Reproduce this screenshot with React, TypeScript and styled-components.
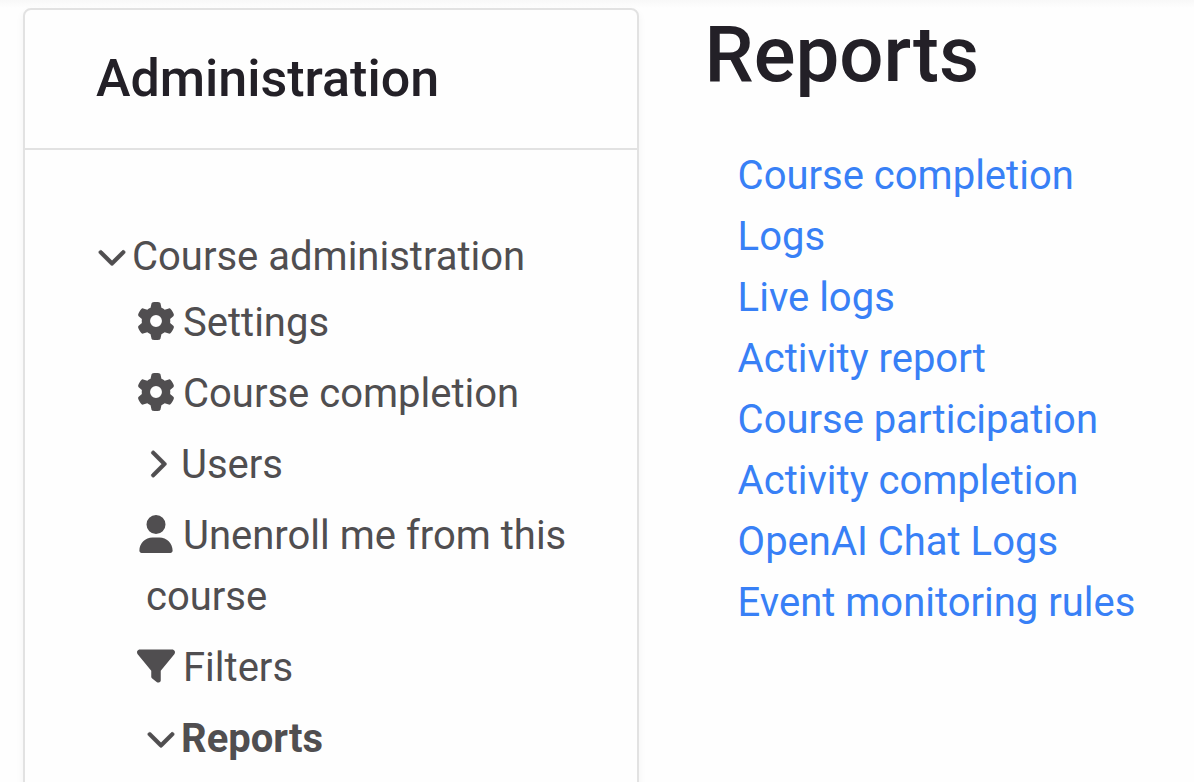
import React from "react";
import styled, { createGlobalStyle, css } from "styled-components";
import { FaChevronDown, FaChevronRight, FaFilter, FaGear, FaUser } from "react-icons/fa6";

const GlobalStyle = createGlobalStyle`
  *, *::before, *::after { box-sizing: border-box; }
  body {
    margin: 0;
    background: #fefefe;
    color: #504e50;
    font-family: Roboto, "Liberation Sans", sans-serif;
    font-size: 40px;
    line-height: 61px;
  }
  h1, h2, ul { margin: 0; padding: 0; }
  ul { list-style: none; }
`;

const Page = styled.div`
  display: flex;
  align-items: stretch;
  height: 100vh;
  padding: 8px 16px 0 23px;
  overflow: hidden;
  background: linear-gradient(#f8f8f8, #fefefe 8px);
`;

const Card = styled.aside`
  flex: 0 0 auto;
  width: 53.3%;
  height: max-content;
  border: 2px solid #e2e2e2;
  border-radius: 8px;
  background: #fefefe;
  box-shadow: 0 4px 8px rgba(0, 0, 0, 0.05);
`;

const CardHeader = styled.header`
  padding: 38px 71px;
  border-bottom: 2px solid #e2e2e2;
`;

const CardTitle = styled.h2`
  color: #232027;
  font-size: 52px;
  font-weight: 500;
  line-height: 62px;
`;

const Tree = styled.nav`
  padding: 76px 56px 76px 72px;
`;

const Branch = styled.ul`
  display: flex;
  flex-direction: column;
  gap: 10px;
  padding: 5px 0 0 49px;
`;

const nodeStyle = css`
  display: block;
  color: inherit;
  font: inherit;
  text-align: left;
  text-decoration: none;
`;

const Toggle = styled.button<{ $bold?: boolean }>`
  ${nodeStyle}
  padding: 0;
  border: 0;
  background: none;
  font-weight: ${(p) => (p.$bold ? 700 : 400)};
  cursor: pointer;
`;

const NodeLink = styled.a`
  ${nodeStyle}
  text-indent: -10px;
`;

const Icon = styled.span<{ $size: number; $width: number; $gap: number }>`
  display: inline-flex;
  align-items: center;
  justify-content: center;
  width: ${(p) => p.$width}px;
  height: 40px;
  margin-right: ${(p) => p.$gap}px;
  font-size: ${(p) => p.$size}px;
  vertical-align: -4px;
  text-indent: 0;
`;

const ToggleIcon = styled(Icon)`
  vertical-align: -1px;

  svg {
    overflow: visible;
    stroke-width: 12px;
  }
`;

const Main = styled.main`
  flex: 1 1 0;
  min-width: 0;
  padding-left: 66px;
`;

const Title = styled.h1`
  color: #232027;
  font-size: 78px;
  font-weight: 500;
  line-height: 94px;
`;

const ReportList = styled.ul`
  padding: 43px 0 0 33px;
`;

const ReportLink = styled.a`
  color: #3880f6;
  text-decoration: none;
`;

const reports = [
  "Course completion",
  "Logs",
  "Live logs",
  "Activity report",
  "Course participation",
  "Activity completion",
  "OpenAI Chat Logs",
  "Event monitoring rules",
];

function TreeLink({ icon, children }: { icon: React.ReactNode; children: React.ReactNode }) {
  return (
    <li>
      <NodeLink href="#">
        <Icon $size={38} $width={40} $gap={7} aria-hidden="true">{icon}</Icon>
        {children}
      </NodeLink>
    </li>
  );
}

function TreeToggle({ open, bold, children }: { open?: boolean; bold?: boolean; children: React.ReactNode }) {
  return (
    <Toggle type="button" aria-expanded={!!open} $bold={bold}>
      <ToggleIcon $size={30} $width={open ? 30 : 22} $gap={open ? 5 : 13} aria-hidden="true">
        {open ? <FaChevronDown /> : <FaChevronRight />}
      </ToggleIcon>
      {children}
    </Toggle>
  );
}

export default function App() {
  return (
    <>
      <GlobalStyle />
      <Page>
        <Card>
          <CardHeader>
            <CardTitle>Administration</CardTitle>
          </CardHeader>
          <Tree aria-label="Administration">
            <TreeToggle open>Course administration</TreeToggle>
            <Branch>
              <TreeLink icon={<FaGear />}>Settings</TreeLink>
              <TreeLink icon={<FaGear />}>Course completion</TreeLink>
              <li><TreeToggle>Users</TreeToggle></li>
              <TreeLink icon={<FaUser />}>Unenroll me from this course</TreeLink>
              <TreeLink icon={<FaFilter />}>Filters</TreeLink>
              <li><TreeToggle open bold>Reports</TreeToggle></li>
            </Branch>
          </Tree>
        </Card>
        <Main>
          <Title>Reports</Title>
          <ReportList>
            {reports.map((name) => (
              <li key={name}><ReportLink href="#">{name}</ReportLink></li>
            ))}
          </ReportList>
        </Main>
      </Page>
    </>
  );
}
